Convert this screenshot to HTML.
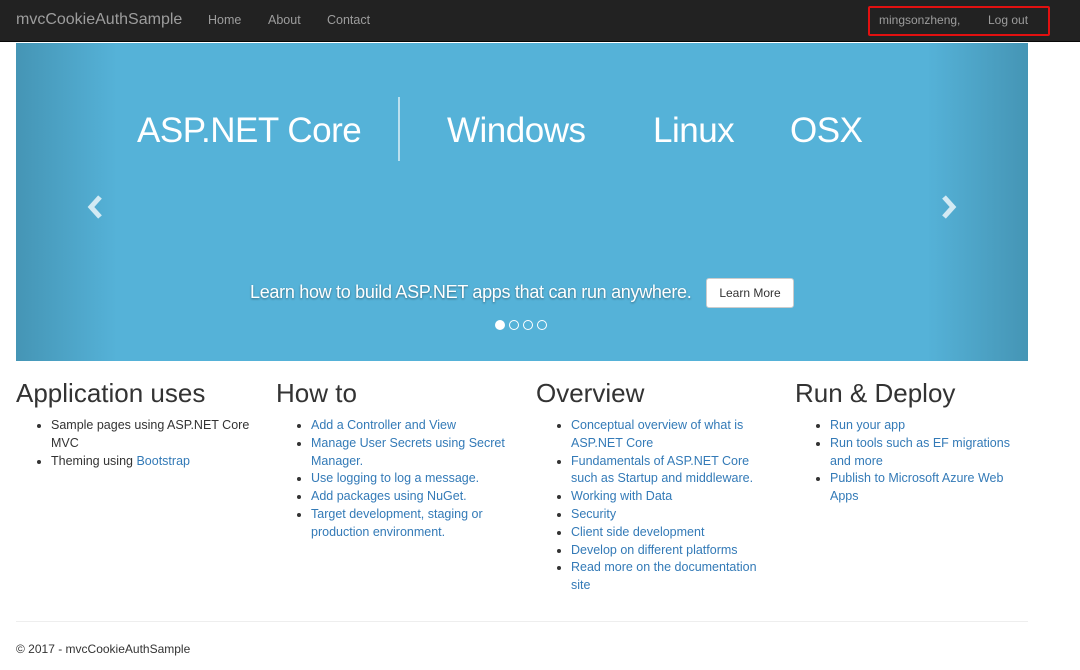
<!DOCTYPE html>
<html><head><style>
*{box-sizing:border-box;margin:0;padding:0}
body{width:1080px;height:670px;background:#fff;font-family:"Liberation Sans",sans-serif;font-size:13px;color:#333;position:relative;overflow:hidden}
.nav{position:absolute;left:0;top:0;width:1080px;height:42px;background:#222;border-bottom:1px solid #080808}
.nav span{position:absolute;color:#9d9d9d;font-size:12.5px;top:13px}
.brand{font-size:16px!important;top:11px!important;left:16px}
.red{position:absolute;left:868px;top:6px;width:182px;height:30px;border:2px solid #e21010;border-radius:2px}
.car{position:absolute;left:16px;top:43px;width:1012px;height:318px;background:linear-gradient(90deg,#4595b5 0%,#55b2d8 10%,#55b2d8 90%,#4595b5 100%)}
.big{position:absolute;top:68px;color:#fff;font-size:35px;font-weight:normal;letter-spacing:-0.5px}
.vl{position:absolute;left:382px;top:54px;width:2px;height:64px;background:rgba(255,255,255,.6)}
.arr{position:absolute;top:152px}
.cap{position:absolute;left:234px;top:239px;color:#fff;font-size:18px;letter-spacing:-0.3px;text-shadow:0 1px 2px rgba(0,0,0,.4)}
.btn{position:absolute;left:690px;top:235px;width:88px;height:30px;background:#fff;border:1px solid #ccc;border-radius:3px;font-size:12px;text-align:center;line-height:28px;color:#333}
.dot{position:absolute;top:277px;width:10px;height:10px;border:1px solid #fff;border-radius:50%}
.col{position:absolute;top:378px;width:240px}
.col h2{font-size:26px;font-weight:normal;margin-bottom:8px;color:#333}
.col ul{margin-left:35px;line-height:17.8px;font-size:12.5px}
.col a{color:#337ab7;text-decoration:none}
hr{position:absolute;left:16px;top:621px;width:1012px;border:0;border-top:1px solid #eee}
.ft{position:absolute;left:16px;top:642px;font-size:12px}
</style></head><body>
<div class="nav"><span class="brand">mvcCookieAuthSample</span><span style="left:208px">Home</span><span style="left:268px">About</span><span style="left:327px">Contact</span><span style="left:879px;font-size:12px">mingsonzheng,</span><span style="left:988px;font-size:12px">Log out</span></div>
<div class="red"></div>
<div class="car">
<div class="big" style="left:121px">ASP.NET Core</div><div class="vl"></div>
<div class="big" style="left:431px">Windows</div><div class="big" style="left:637px">Linux</div><div class="big" style="left:774px">OSX</div>
<svg class="arr" style="left:70px" width="18" height="24" viewBox="0 0 18 24"><path d="M14 2 L5 12 L14 22" stroke="#fff" stroke-opacity=".75" stroke-width="5" fill="none"/></svg>
<svg class="arr" style="left:924px" width="18" height="24" viewBox="0 0 18 24"><path d="M4 2 L13 12 L4 22" stroke="#fff" stroke-opacity=".75" stroke-width="5" fill="none"/></svg>
<div class="cap">Learn how to build ASP.NET apps that can run anywhere.</div>
<div class="btn">Learn More</div>
<div class="dot" style="left:479px;background:#fff"></div><div class="dot" style="left:493px"></div><div class="dot" style="left:507px"></div><div class="dot" style="left:521px"></div>
</div>
<div class="col" style="left:16px"><h2>Application uses</h2><ul><li>Sample pages using ASP.NET Core MVC</li><li>Theming using <a>Bootstrap</a></li></ul></div>
<div class="col" style="left:276px"><h2>How to</h2><ul><li><a>Add a Controller and View</a></li><li><a>Manage User Secrets using Secret Manager.</a></li><li><a>Use logging to log a message.</a></li><li><a>Add packages using NuGet.</a></li><li><a>Target development, staging or production environment.</a></li></ul></div>
<div class="col" style="left:536px"><h2>Overview</h2><ul><li><a>Conceptual overview of what is ASP.NET Core</a></li><li><a>Fundamentals of ASP.NET Core such as Startup and middleware.</a></li><li><a>Working with Data</a></li><li><a>Security</a></li><li><a>Client side development</a></li><li><a>Develop on different platforms</a></li><li><a>Read more on the documentation site</a></li></ul></div>
<div class="col" style="left:795px;width:232px"><h2>Run &amp; Deploy</h2><ul><li><a>Run your app</a></li><li><a>Run tools such as EF migrations and more</a></li><li><a>Publish to Microsoft Azure Web Apps</a></li></ul></div>
<hr><div class="ft">© 2017 - mvcCookieAuthSample</div>
</body></html>
